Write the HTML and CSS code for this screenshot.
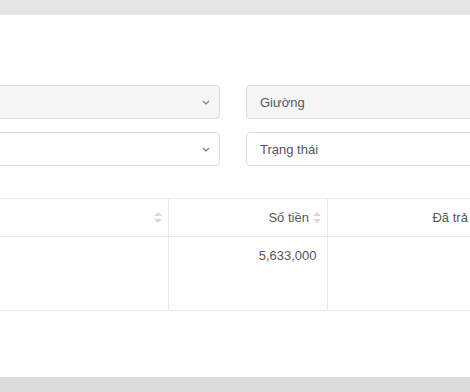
FILE: index.html
```html
<!DOCTYPE html>
<html>

<head>
	<meta charset="UTF-8">
	<title>Công nợ</title>
	<link rel="stylesheet" href="styles.css">
</head>

<body>

	<div class="card">

		<div class="filters">
			<div class="select">
				<span></span>
				<svg class="chevron" width="8" height="5" viewBox="0 0 8 5">
					<path d="M1 1 L4 4 L7 1" fill="none" stroke="#777" stroke-width="1.1" />
				</svg>
			</div>
			<input type="text" class="field disabled" value="Giường" readonly>

			<div class="select white">
				<span></span>
				<svg class="chevron" width="8" height="5" viewBox="0 0 8 5">
					<path d="M1 1 L4 4 L7 1" fill="none" stroke="#777" stroke-width="1.1" />
				</svg>
			</div>
			<input type="text" class="field" placeholder="Trạng thái">
		</div>

		<table class="grid">
			<thead>
				<tr>
					<th class="col-name"><span class="sort"></span></th>
					<th class="col-num">Số tiền <span class="sort"></span></th>
					<th class="col-num paid">Đã trả <span class="sort"></span></th>
					<th></th>
				</tr>
			</thead>
			<tbody>
				<tr>
					<td></td>
					<td class="num">5,633,000</td>
					<td class="num"></td>
					<td></td>
				</tr>
			</tbody>
		</table>

	</div>

</body>

</html>
```

FILE: styles.css
```css
html,
body {
	margin: 0;
	height: 100%;
	overflow: hidden;
}

body {
	background: linear-gradient(#e4e4e4, #dcdcdc);
	font-family: "Liberation Sans", Arial, sans-serif;
	font-size: 13px;
	color: #555560;
	padding-top: 15px;
	box-sizing: border-box;
}

.card {
	background-color: white;
	margin-left: -200px;
	width: 900px;
	height: 362px;
	padding: 70px 20px 0 20px;
	box-sizing: border-box;
}

.filters {
	display: grid;
	grid-template-columns: 400px 400px;
	column-gap: 26px;
	row-gap: 13px;
}

.select,
.field {
	height: 34px;
	border: 1px solid #dcdce0;
	border-radius: 4px;
	box-sizing: border-box;
	background-color: #f5f5f5;
}

.select {
	display: flex;
	align-items: center;
	justify-content: flex-end;
	padding-right: 9px;
}

.select.white,
.field {
	background-color: white;
}

.field.disabled {
	background-color: #f5f5f5;
}

.field {
	width: 100%;
	padding: 0 13px;
	font-family: inherit;
	font-size: 13px;
	color: #555560;
	outline: none;
}

.field::placeholder {
	color: #555560;
}

.chevron {
	display: block;
}

.grid {
	margin-top: 32px;
	border-collapse: collapse;
	table-layout: fixed;
	width: 860px;
}

.grid th,
.grid td {
	border-top: 1px solid #e8e8ef;
	border-bottom: 1px solid #e8e8ef;
	border-right: 1px solid #e8e8ef;
	text-align: right;
	font-weight: normal;
	box-sizing: border-box;
}

.grid th {
	height: 38px;
	padding: 0 6px 0 8px;
	vertical-align: middle;
}

.grid td {
	height: 74px;
	padding: 11px 10px 0 8px;
	vertical-align: top;
}

.grid th:last-child,
.grid td:last-child {
	border-right: none;
}

.col-name {
	width: 348px;
}

.col-num {
	width: 159px;
}

.sort {
	display: inline-block;
	width: 8px;
	height: 11px;
	vertical-align: -1px;
	position: relative;
}

.sort::before,
.sort::after {
	content: "";
	position: absolute;
	left: 0;
	border-left: 4px solid transparent;
	border-right: 4px solid transparent;
}

.sort::before {
	top: 0;
	border-bottom: 4px solid #d6d6de;
}

.sort::after {
	bottom: 0;
	border-top: 4px solid #d6d6de;
}
```
